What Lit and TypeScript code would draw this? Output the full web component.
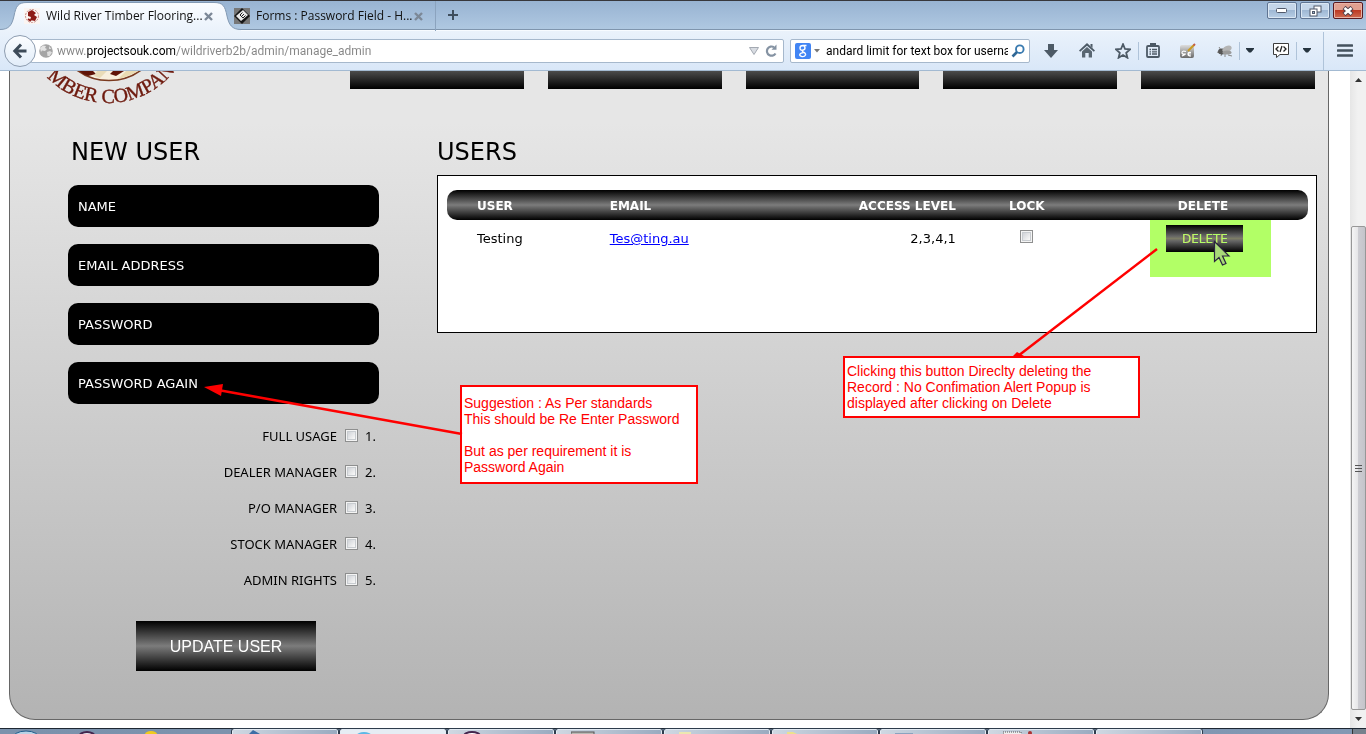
import { LitElement, html, css, svg } from "lit";
import { customElement, property, state } from "lit/decorators.js";

interface Level {
  id: number;
  name: string;
}

interface User {
  name: string;
  email: string;
  access: string;
}

const LEVELS: Level[] = [
  { id: 1, name: "FULL USAGE" },
  { id: 2, name: "DEALER MANAGER" },
  { id: 3, name: "P/O MANAGER" },
  { id: 4, name: "STOCK MANAGER" },
  { id: 5, name: "ADMIN RIGHTS" },
];

const FIELDS = [
  { id: "name", label: "NAME", type: "text" },
  { id: "email", label: "EMAIL ADDRESS", type: "text" },
  { id: "password", label: "PASSWORD", type: "password" },
  { id: "again", label: "PASSWORD AGAIN", type: "password" },
];

const NAV = ["Home", "Products", "Orders", "Stock", "Account"];

const checkboxStyles = css`
  input[type="checkbox"] {
    appearance: none;
    width: 13px;
    height: 13px;
    margin: 0;
    border: 1px solid #8e8f8f;
    background: linear-gradient(135deg, #c4c8ce, #f6f6f6 75%);
    box-shadow: inset 0 0 0 1px #f4f4f4, inset 0 0 0 2px #c8ccd0;
  }
  input[type="checkbox"]:checked {
    background: #4b6a9b;
  }
`;

@customElement("browser-chrome")
class BrowserChrome extends LitElement {
  static styles = css`
    :host {
      display: block;
      font: 12px/16px "Open Sans", sans-serif;
      color: #111;
    }
    * {
      box-sizing: border-box;
    }
    button {
      border: 0;
      padding: 0;
      background: none;
      display: flex;
      align-items: center;
      justify-content: center;
      flex: none;
    }
    .strip {
      display: flex;
      height: 30px;
      border-top: 1px solid #37373c;
      border-bottom: 1px solid #7f95ad;
      background: linear-gradient(#98b3d2, #afc8e1);
    }
    .tab {
      position: relative;
      display: flex;
      align-items: center;
      gap: 6px;
      height: 30px;
      padding: 0 12px 0 24px;
      width: 225px;
    }
    .tab.other {
      width: 211px;
      padding: 0 12px 0 9px;
      border-right: 1px solid #8ba3be;
    }
    .shape {
      position: absolute;
      left: 0;
      top: 0;
      z-index: 0;
    }
    .tab > .fav,
    .tab > .title,
    .tab > button {
      position: relative;
      z-index: 1;
    }
    .fav {
      flex: none;
    }
    .title {
      flex: 1;
      min-width: 0;
      white-space: nowrap;
    }
    .new {
      width: 34px;
    }
    .window {
      margin-left: auto;
      display: flex;
      gap: 3px;
      padding: 1px 3px 0 0;
    }
    .window button {
      width: 30px;
      height: 17px;
      border: 1px solid #5f7492;
      border-radius: 2px;
      background: linear-gradient(#c5d6e9 48%, #9fb8d4 50%, #b9cfe6);
      box-shadow: inset 0 0 0 1px #dbe7f3;
    }
    .window .close {
      border-color: #5a1a20;
      background: linear-gradient(#e0a090 48%, #bd3a24 50%, #cf6b52);
      box-shadow: inset 0 0 0 1px #e8b3a6;
    }
    .bar {
      display: flex;
      align-items: center;
      height: 41px;
      padding: 0 9px 0 4px;
      background: linear-gradient(#eaf2fb, #d9e7f8);
      border-top: 1px solid #f7fbff;
      border-bottom: 1px solid #a3bad2;
    }
    .back {
      width: 32px;
      height: 32px;
      border: 1px solid #8e9db0;
      border-radius: 50%;
      background: linear-gradient(#fbfdff, #e2edf9);
      z-index: 1;
    }
    .box {
      display: flex;
      align-items: center;
      height: 24px;
      border: 1px solid #a6b8cc;
      border-radius: 2px;
      background: #fff;
    }
    .url {
      flex: 1;
      margin-left: -6px;
      padding: 0 4px 0 8px;
      gap: 1px;
    }
    .search {
      width: 240px;
      margin-left: 6px;
      padding: 0 4px;
      gap: 3px;
    }
    .search button {
      width: 14px;
    }
    input {
      flex: 1;
      min-width: 0;
      border: 0;
      outline: 0;
      padding: 0 0 0 3px;
      height: 20px;
      font: 12px/16px Roboto, sans-serif;
      color: #000;
      background: none;
    }
    .url input {
      color: transparent;
      background: linear-gradient(90deg, #858585 33px, #000 33px 121px, #858585 121px);
      -webkit-background-clip: text;
      background-clip: text;
    }
    .url button {
      width: 16px;
    }
    .tools {
      display: flex;
      align-items: center;
      flex: none;
    }
    .tools button {
      width: 30px;
      height: 30px;
      margin-left: 6px;
    }
    .tools .slim {
      width: 20px;
      margin-left: 0;
    }
    .tools .list {
      width: 28px;
      margin-left: 0;
    }
    .rule {
      width: 1px;
      height: 18px;
      background: #afc3d9;
    }
    .rule.tall {
      height: 38px;
      margin-left: 6px;
    }
    .tools .menu {
      width: 24px;
      margin-left: 9px;
    }
  `;

  private cross = svg`<path d="M1 1L8 8M8 1L1 8" stroke="#7c8897" stroke-width="2.4"/>`;

  private caret = html`<svg width="8" height="5"><path d="M0 0H8V1L5 4.500H3L0 1Z" fill="#26343f" /></svg>`;

  render() {
    return html`
      <div class="strip">
        <div class="tab">
          <svg class="shape" width="242" height="30">
            <defs>
              <linearGradient id="tabfill" x2="0" y2="1">
                <stop offset="0" stop-color="#fafcff" />
                <stop offset="1" stop-color="#eaf2fb" />
              </linearGradient>
            </defs>
            <path
              d="M0 28.500C9 28.500 12 24 14 15C16 5 18 1.500 27 1.500H214C223 1.500 225 5 227 15C229 24 232 28.500 241 28.500V30H0Z"
              fill="url(#tabfill)"
            />
            <path
              d="M0 28.500C9 28.500 12 24 14 15C16 5 18 1.500 27 1.500H214C223 1.500 225 5 227 15C229 24 232 28.500 241 28.500"
              fill="none"
              stroke="#8299b3"
            />
          </svg>
          <svg class="fav" width="16" height="16">
            <rect width="16" height="16" fill="#fbf5f2" />
            <circle cx="8" cy="8" r="6.500" fill="none" stroke="#c98d86" stroke-dasharray="2 1" />
            <path d="M4 4L8 2L12 5L10 7L13 9L11 13L6 12L7 9L4 8Z" fill="#8d1b16" />
            <path d="M4 11L7 13" stroke="#8d1b16" stroke-width="2" />
          </svg>
          <span class="title">Wild River Timber Flooring...</span>
          <button aria-label="Close tab"><svg width="9" height="9">${this.cross}</svg></button>
        </div>
        <div class="tab other">
          <svg class="fav" width="16" height="16">
            <rect width="16" height="16" fill="#777" />
            <path d="M8 0L16 8L8 16L0 8Z" fill="#161616" />
            <path d="M9 2L14 7L7 13L2 8Z" fill="#e9e9e9" />
            <path d="M6 7L9 10M6 7L8.500 4.500M7.500 8.500L10 6M9 10L11.500 7.500" stroke="#222" fill="none" />
          </svg>
          <span class="title">Forms : Password Field - H...</span>
          <button aria-label="Close tab"><svg width="9" height="9">${this.cross}</svg></button>
        </div>
        <button class="new" aria-label="New tab">
          <svg width="10" height="10"><path d="M5 0V10M0 5H10" stroke="#3f4e5d" stroke-width="2" /></svg>
        </button>
        <div class="window">
          <button aria-label="Minimize">
            <svg width="12" height="5"><rect x=".5" y=".5" width="10" height="4" rx="1" fill="#fff" stroke="#50596a" /></svg>
          </button>
          <button aria-label="Restore">
            <svg width="13" height="12">
              <rect x="5" y="1" width="7" height="6" fill="#fff" stroke="#50596a" />
              <rect x="1" y="4" width="7" height="7" fill="#fff" stroke="#50596a" />
              <rect x="3.500" y="6.500" width="2" height="2" fill="#9fb8d4" stroke="#50596a" />
            </svg>
          </button>
          <button class="close" aria-label="Close">
            <svg width="12" height="10">
              <path d="M2 1.500L10 8.500M10 1.500L2 8.500" stroke="#50404a" stroke-width="4.500" />
              <path d="M2.500 2L9.500 8M9.500 2L2.500 8" stroke="#fff" stroke-width="2.500" />
            </svg>
          </button>
        </div>
      </div>
      <div class="bar">
        <button class="back" aria-label="Back">
          <svg width="16" height="16"><path d="M9 1.500L2.800 8L9 14.500M3 8H14.500" fill="none" stroke="#3d4b59" stroke-width="3" /></svg>
        </button>
        <div class="box url">
          <svg width="14" height="14">
            <circle cx="7" cy="7" r="6.800" fill="#a5a5a5" />
            <path d="M1 4L4 1.500L7 2L6 4L8 5L6 7L3 6.500L2 8Z" fill="#e4e4e4" />
            <path d="M8 8L11 7L13 8.500L10.500 12L8.500 12ZM10 2L12.500 5L10 5Z" fill="#dedede" />
          </svg>
          <input aria-label="Address" value="www.projectsouk.com/wildriverb2b/admin/manage_admin" />
          <button aria-label="History"><svg width="10" height="8"><path d="M.5 .5H9.500L5 7.500Z" fill="#d8dce2" stroke="#a3a9b2" /></svg></button>
          <button aria-label="Reload">
            <svg width="13" height="13">
              <path d="M10.500 9.500A4.600 4.600 0 1 1 9 3.200" fill="none" stroke="#8593a3" stroke-width="2.200" />
              <path d="M6.500 5.800L11.500 .5V5.800Z" fill="#8593a3" />
            </svg>
          </button>
        </div>
        <div class="box search">
          <svg width="16" height="16">
            <rect width="16" height="16" rx="2" fill="#4285f4" />
            <path
              d="M11.500 2.500H8Q5 2.500 5 5T7.500 7.200Q10 7 10 5T7.800 2.600M8 7.200Q6.500 8.200 8.500 9.200Q11 10.500 10.500 12Q9.500 14 7 13.600Q4.500 13.200 4.800 11.400Q5.200 9.800 8.500 9.600"
              fill="none"
              stroke="#fff"
              stroke-width="1.400"
            />
          </svg>
          <svg width="6" height="4"><path d="M0 0H6L3 3.500Z" fill="#777" /></svg>
          <input aria-label="Search" value="andard limit for text box for userna" />
          <button aria-label="Go">
            <svg width="14" height="14">
              <circle cx="8.800" cy="5.200" r="3.800" fill="none" stroke="#3a7bb0" stroke-width="1.900" />
              <path d="M6 8L1.500 12.500" stroke="#2f6795" stroke-width="2.600" />
            </svg>
          </button>
        </div>
        <div class="tools">
          <button aria-label="Downloads">
            <svg width="14" height="14"><path d="M4 0H10V6H14L7 14L0 6H4Z" fill="#4d5a66" /></svg>
          </button>
          <button aria-label="Home">
            <svg width="16" height="15">
              <path d="M8 0L16 7.500L14.800 8.800L8 2.800L1.200 8.800L0 7.500Z" fill="#4d5a66" />
              <path d="M11.500 1H13.500V5L11.500 3Z" fill="#4d5a66" />
              <path d="M3 8.500L8 4L13 8.500V14.500H9.700V10H6.300V14.500H3Z" fill="#5a6772" />
            </svg>
          </button>
          <button aria-label="Bookmark">
            <svg width="16" height="16">
              <path
                d="M8 1.200L10 6L15 6.400L11.200 9.700L12.400 14.700L8 12L3.600 14.700L4.800 9.700L1 6.400L6 6Z"
                fill="none"
                stroke="#4d5a66"
                stroke-width="1.800"
              />
            </svg>
          </button>
          <span class="rule"></span>
          <button class="list" aria-label="Bookmarks list">
            <svg width="14" height="15">
              <rect x="1" y="3" width="12" height="11" rx="1" fill="none" stroke="#4d5a66" stroke-width="1.800" />
              <path d="M4 0H10V4H4Z" fill="#4d5a66" />
              <path d="M3.500 6.500H5M3.500 8.800H5M3.500 11H5M6 6.500H11M6 8.800H11M6 11H11" stroke="#4d5a66" stroke-width="1.300" />
            </svg>
          </button>
          <button aria-label="Recorder">
            <svg width="16" height="16">
              <defs>
                <linearGradient id="rec" x2="0" y2="1">
                  <stop offset="0" stop-color="#ddd" />
                  <stop offset="1" stop-color="#6a6a6a" />
                </linearGradient>
              </defs>
              <rect y="2" width="14" height="13" rx="2" fill="url(#rec)" />
              <path
                d="M6 8.500Q2 7.500 2 9.500T4.500 11T2 13M11 9.500Q8 9 8 11T11 13M8 11H11"
                stroke="#fff"
                stroke-width="1.200"
                fill="none"
              />
              <path d="M8 8L14 2" stroke="#c99a20" stroke-width="2" />
              <path d="M13.500 2.500L15 1" stroke="#c25a4a" stroke-width="2" />
            </svg>
          </button>
          <button aria-label="Debugger">
            <svg width="17" height="14">
              <path d="M1 8L4 9M3 3L5 6M5 12L6 9M9 13L9 9M12 11L16 12M12 2L10 5" stroke="#888" />
              <ellipse cx="6" cy="7.500" rx="4" ry="3" fill="#565656" />
              <ellipse cx="11" cy="5" rx="5" ry="3" fill="#b4b4b4" transform="rotate(-25 11 5)" />
              <ellipse cx="11" cy="8.500" rx="4.500" ry="2" fill="#9a9a9a" />
            </svg>
          </button>
          <span class="rule"></span>
          <button class="slim" aria-label="Debugger menu">${this.caret}</button>
          <button aria-label="Web developer">
            <svg width="16" height="15">
              <path d="M.5 .5H15.500V11.500H7L3.500 14.500V11.500H.5Z" fill="#fff" stroke="#3c3c3c" />
              <path d="M5.500 3.500L3 6L5.500 8.500M10.500 3.500L13 6L10.500 8.500M9 3L7 9" fill="none" stroke="#222" stroke-width="1.300" />
            </svg>
          </button>
          <span class="rule"></span>
          <button class="slim" aria-label="Web developer menu">${this.caret}</button>
          <span class="rule tall"></span>
          <button class="menu" aria-label="Menu">
            <svg width="16" height="13">
              <path d="M1 1.500H15M1 6.500H15M1 11.500H15" stroke="#44525e" stroke-width="2.600" stroke-linecap="round" />
            </svg>
          </button>
        </div>
      </div>
    `;
  }
}

@customElement("new-user-form")
class NewUserForm extends LitElement {
  @state() private levels = new Set<number>();

  static styles = [
    checkboxStyles,
    css`
      :host {
        display: block;
        position: relative;
      }
      * {
        box-sizing: border-box;
      }
      h2 {
        margin: 0 0 16px;
        padding-left: 3px;
        font: 24px/34px "DejaVu Sans", sans-serif;
      }
      form {
        display: flex;
        flex-direction: column;
      }
      .fields {
        display: grid;
        gap: 17px;
        padding-right: 5px;
      }
      .field {
        width: 100%;
        height: 42px;
        padding: 0 10px;
        border: 0;
        border-radius: 10px;
        background: #000;
        color: #fff;
        font: 13px/18px "DejaVu Sans", sans-serif;
      }
      .field::placeholder {
        color: #fff;
        opacity: 1;
      }
      .levels {
        display: grid;
        gap: 16px;
        padding: 22px 7px 0 0;
        font: 13px/20px "Noto Sans", sans-serif;
      }
      .level {
        display: flex;
        align-items: center;
        justify-content: flex-end;
      }
      .level input {
        margin: 0 7px 2px 8px;
      }
      .number {
        width: 12px;
      }
      .submit {
        align-self: center;
        width: 180px;
        height: 50px;
        margin-top: 31px;
        padding: 2px 0 0;
        border: 0;
        background: linear-gradient(#000, #7c7c7c 50%, #000);
        color: #fff;
        font: 16px/20px "Liberation Sans", sans-serif;
      }
    `,
  ];

  private toggle(id: number) {
    const next = new Set(this.levels);
    next.has(id) ? next.delete(id) : next.add(id);
    this.levels = next;
  }

  render() {
    return html`
      <h2>NEW USER</h2>
      <form @submit=${(e: Event) => e.preventDefault()}>
        <div class="fields">
          ${FIELDS.map(
            (f) => html`<input class="field" id=${f.id} type=${f.type} placeholder=${f.label} aria-label=${f.label} />`
          )}
        </div>
        <div class="levels">
          ${LEVELS.map(
            (l) => html`
              <div class="level">
                <label for="level-${l.id}">${l.name}</label>
                <input
                  type="checkbox"
                  id="level-${l.id}"
                  .checked=${this.levels.has(l.id)}
                  @change=${() => this.toggle(l.id)}
                />
                <span class="number">${l.id}.</span>
              </div>
            `
          )}
        </div>
        <button class="submit">UPDATE USER</button>
      </form>
    `;
  }
}

@customElement("users-panel")
class UsersPanel extends LitElement {
  @property({ attribute: false }) users: User[] = [];

  static styles = [
    checkboxStyles,
    css`
      :host {
        display: block;
      }
      * {
        box-sizing: border-box;
      }
      h2 {
        margin: 0 0 6px;
        font: 24px/34px "DejaVu Sans", sans-serif;
      }
      .frame {
        min-height: 158px;
        padding: 14px 8px 0 9px;
        border: 1px solid #000;
        background: #fff;
      }
      table {
        width: 100%;
        table-layout: fixed;
        border-collapse: separate;
        border-spacing: 0;
        font: 13px/18px "DejaVu Sans", sans-serif;
      }
      th {
        height: 30px;
        padding: 2px 0 0;
        background: linear-gradient(#000, #7c7c7c 50%, #000);
        color: #fff;
        font: bold 12px/18px "DejaVu Sans", sans-serif;
        text-align: left;
      }
      td {
        height: 37px;
        padding: 10px 0 0;
        vertical-align: top;
      }
      .user {
        width: 18.9%;
        padding-left: 30px;
      }
      th.user {
        border-radius: 10px 0 0 10px;
      }
      .email {
        width: 23.2%;
      }
      .access {
        width: 17%;
        text-align: right;
      }
      .lock {
        width: 16.5%;
        text-align: center;
      }
      .delete {
        width: 24.4%;
        text-align: center;
      }
      th.delete {
        border-radius: 0 10px 10px 0;
      }
      td.delete {
        padding: 5px 0 0 4px;
      }
      a {
        color: #00f;
      }
      .remove {
        display: block;
        width: 77px;
        height: 27px;
        margin: 0 auto;
        padding: 0;
        border: 0;
        background: linear-gradient(#000, #7c7c7c 50%, #000);
        color: #fff;
        font: 12px/18px "DejaVu Sans", sans-serif;
      }
    `,
  ];

  render() {
    return html`
      <h2>USERS</h2>
      <div class="frame">
        <table>
          <thead>
            <tr>
              <th class="user">USER</th>
              <th class="email">EMAIL</th>
              <th class="access">ACCESS LEVEL</th>
              <th class="lock">LOCK</th>
              <th class="delete">DELETE</th>
            </tr>
          </thead>
          <tbody>
            ${this.users.map(
              (u) => html`
                <tr>
                  <td class="user">${u.name}</td>
                  <td class="email"><a href="mailto:${u.email}">${u.email}</a></td>
                  <td class="access">${u.access}</td>
                  <td class="lock"><input type="checkbox" aria-label="Lock ${u.name}" /></td>
                  <td class="delete"><button class="remove">DELETE</button></td>
                </tr>
              `
            )}
          </tbody>
        </table>
      </div>
    `;
  }
}

@customElement("app-root")
class AppRoot extends LitElement {
  private users: User[] = [{ name: "Testing", email: "Tes@ting.au", access: "2,3,4,1" }];

  static styles = css`
    :host {
      display: flex;
      flex-direction: column;
      height: 100vh;
      overflow: hidden;
      background: #fff;
      color: #000;
    }
    * {
      box-sizing: border-box;
    }
    .view {
      flex: 1;
      min-height: 0;
      display: flex;
      overflow: hidden;
    }
    .page {
      flex: 1;
      margin: 0 21px 8px 9px;
      border: 1px solid #666;
      border-top: 0;
      border-radius: 0 0 26px 26px;
      background: linear-gradient(#e6e6e6 8%, #b3b3b3);
    }
    header {
      display: flex;
      height: 64px;
      padding-right: 13px;
    }
    .logo {
      width: 340px;
      flex: none;
    }
    .logo svg {
      display: block;
      margin-left: 30px;
    }
    .logo text {
      font: 20px "Liberation Serif", serif;
      fill: #6e1a0e;
      stroke: #6e1a0e;
      stroke-width: 0.4px;
    }
    nav {
      flex: 1;
      display: grid;
      grid-template-columns: repeat(5, 1fr);
      gap: 24px;
    }
    nav a {
      height: 18px;
      background: linear-gradient(#4c4c4c, #000);
    }
    .columns {
      display: grid;
      grid-template-columns: 316px 1fr;
      gap: 53px;
      padding: 0 11px 0 58px;
    }
    .column {
      position: relative;
    }
    .note {
      position: absolute;
      border: 2px solid #f00;
      background: #fff;
      color: #f00;
      font: 14px/16px "Liberation Sans", sans-serif;
      margin: 0;
      white-space: nowrap;
    }
    .note.again {
      left: 392px;
      top: 250px;
      width: 238px;
      height: 99px;
      padding: 8px 0 0 2px;
      z-index: 2;
    }
    .note.confirm {
      right: 177px;
      top: 221px;
      width: 297px;
      height: 62px;
      padding: 5px 0 0 2px;
    }
    .arrow-again {
      position: absolute;
      left: 132px;
      top: 240px;
      z-index: 3;
    }
    .arrow-confirm {
      position: absolute;
      right: 157px;
      top: 110px;
    }
    .highlight {
      position: absolute;
      right: 46px;
      top: 85px;
      width: 121px;
      height: 57px;
      background: #b2ff66;
      mix-blend-mode: darken;
    }
    .pointer {
      position: absolute;
      right: 86px;
      top: 105px;
    }
    .scroll {
      flex: none;
      width: 16px;
      display: flex;
      flex-direction: column;
      align-items: center;
      background: linear-gradient(90deg, #e6e6e6, #f1f1f1 50%);
    }
    .end {
      height: 18px;
      display: flex;
      align-items: center;
    }
    .track {
      flex: 1;
      width: 100%;
      padding: 137px 0 0 1px;
      display: flex;
    }
    .thumb {
      flex: 1;
      border: 1px solid #979797;
      border-radius: 2px;
      background: linear-gradient(90deg, #f5f5f5, #e6e6e8 45%, #cdcdd2 50%, #c4c4ca);
      display: flex;
      align-items: center;
      justify-content: center;
    }
    .taskbar {
      flex: none;
      display: flex;
      height: 6px;
      gap: 2px;
      padding-left: 232px;
      border-top: 1px solid #1d2733;
      background: linear-gradient(90deg, #7b92ac, #8298b3);
      position: relative;
    }
    .task {
      width: 106px;
      border: solid #e3ebf3;
      border-width: 1px 1px 0 1px;
      border-radius: 2px 2px 0 0;
      background: linear-gradient(90deg, #cfd8e2, #99abc0);
      outline: 1px solid #2e3c4c;
      overflow: hidden;
    }
    .task svg {
      display: block;
      margin-left: 14px;
    }
    .task.active {
      background: #e6edf4;
    }
    .start {
      position: absolute;
      left: 12px;
      top: 1px;
    }
    .desktop {
      margin-left: auto;
      width: 14px;
      border-left: 1px solid #333;
      background: #76818d;
    }
  `;

  render() {
    const glyphs = [
      svg`<path d="M2 4L6 0L13 4Z" fill="#3c6ea6"/>`,
      svg`<ellipse cx="9" cy="5" rx="7" ry="3" fill="#5cb8e6"/>`,
      svg`<ellipse cx="9" cy="6" rx="8" ry="4" fill="#fff" stroke="#43264e" stroke-width="2"/>`,
      svg`<rect x="0" y="2" width="23" height="4" fill="#b9b9b4" stroke="#555"/>`,
      svg`<rect x="0" y="2" width="12" height="3" fill="#ece7b0"/>`,
      svg`<path d="M0 2H6L12 5H0Z" fill="#ece18c"/>`,
      svg`<rect x="0" y="3" width="18" height="3" fill="#8ba3bf"/>`,
      svg`<path d="M0 2H18V5H0Z" fill="#eee" stroke="#555" stroke-dasharray="1 1"/><circle cx="27" cy="3" r="2" fill="#a33"/>`,
      svg``,
    ];
    return html`
      <browser-chrome></browser-chrome>
      <div class="view">
        <main class="page">
          <header>
            <div class="logo">
              <svg width="144" height="36" viewBox="40 71 144 36">
                <circle cx="109" cy="26" r="54.500" fill="#f7efdd" stroke="#7a3a20" stroke-width="1.600" />
                <path d="M79 71H93L96 74L88 76Q82 74 79 71Z" fill="#5f1408" />
                <path d="M97 71H107L100 78Q97 77 94 76Z" fill="#e9dcb8" />
                <path d="M113 71H124L116 76L110 74Z" fill="#5f1408" />
                <path d="M126 71H138Q130 76 118 79Z" fill="#eadbb2" />
                <path id="ring" d="M23 18A85 85 0 0 0 193 18" fill="none" />
                <text><textPath href="#ring" startOffset="65">MBER COMPAN</textPath></text>
              </svg>
            </div>
            <nav>${NAV.map((n) => html`<a href="#" aria-label=${n}></a>`)}</nav>
          </header>
          <div class="columns">
            <section class="column">
              <new-user-form></new-user-form>
              <p class="note again">Suggestion : As Per standards<br />This should be Re Enter Password<br /><br />But as per requirement it is<br />Password Again</p>
              <svg class="arrow-again" width="264" height="64">
                <path d="M18 15L262 59" stroke="#f00" stroke-width="2.600" />
                <path d="M4 12L23 9L21 21Z" fill="#f00" />
              </svg>
            </section>
            <section class="column">
              <users-panel .users=${this.users}></users-panel>
              <div class="highlight"></div>
              <svg class="arrow-confirm" width="160" height="112">
                <path d="M157 4L18 111" stroke="#f00" stroke-width="2.400" />
                <path d="M12 112L17 107L24 111Z" fill="#f00" />
              </svg>
              <svg class="pointer" width="18" height="27">
                <path
                  d="M1.500 1.500V21.500L6 17.500L9.500 25L13 23.500L9.500 16H16Z"
                  fill="#a8d878"
                  stroke="#2b2340"
                  stroke-width="1.200"
                />
              </svg>
              <p class="note confirm">Clicking this button Direclty deleting the<br />Record : No Confimation Alert Popup is<br />displayed after clicking on Delete</p>
            </section>
          </div>
        </main>
        <div class="scroll" aria-hidden="true">
          <span class="end"><svg width="7" height="4"><path d="M0 4L3.500 0L7 4Z" fill="#333" /></svg></span>
          <div class="track">
            <div class="thumb">
              <svg width="7" height="8"><path d="M0 1.500H7M0 4.500H7M0 7.500H7" stroke="#555" /></svg>
            </div>
          </div>
          <span class="end"><svg width="7" height="4"><path d="M0 0L3.500 4L7 0Z" fill="#333" /></svg></span>
        </div>
      </div>
      <div class="taskbar" aria-hidden="true">
        <svg class="start" width="150" height="4">
          <ellipse cx="14" cy="9" rx="14" ry="8" fill="#b9d3e6" stroke="#1f5c8a" />
          <ellipse cx="75" cy="7" rx="8" ry="5" fill="#e8e8ee" stroke="#43264e" stroke-width="2" />
          <ellipse cx="139" cy="4" rx="6" ry="3" fill="#f0cb1e" />
        </svg>
        ${glyphs.map((g, i) => html`<span class="task ${i === 1 ? "active" : ""}"><svg width="40" height="5">${g}</svg></span>`)}
        <span class="desktop"></span>
      </div>
    `;
  }
}
